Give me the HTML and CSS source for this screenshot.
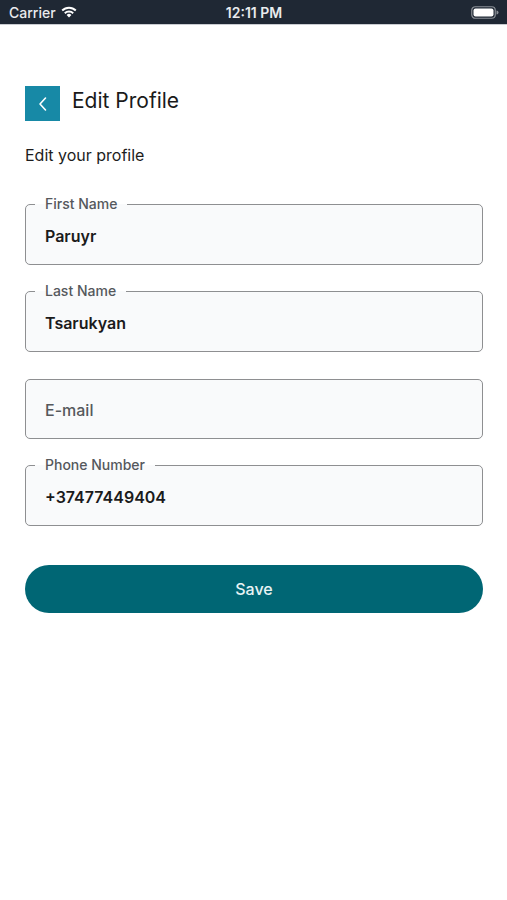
FILE: index.html
```html
<!DOCTYPE html>
<html>
<head>
    <title>Edit Profile</title>
    <meta charset="utf-8">
    <link rel="stylesheet" href="styles.css">
</head>
<body>
    <div class="status-bar">
        <span class="carrier">Carrier
            <svg class="wifi" width="16" height="12" viewBox="0 0 16 12">
                <path d="M8 11.5 L5.6 9 A3.4 3.4 0 0 1 10.4 9 Z" fill="#fff"/>
                <path d="M3.8 7.2 A6 6 0 0 1 12.2 7.2" stroke="#fff" stroke-width="1.9" fill="none"/>
                <path d="M1.2 4.5 A9.6 9.6 0 0 1 14.8 4.5" stroke="#fff" stroke-width="1.9" fill="none"/>
            </svg>
        </span>
        <span class="time">12:11 PM</span>
        <span class="battery">
            <svg width="28" height="13" viewBox="0 0 28 13">
                <rect x="0.75" y="0.75" width="23.5" height="11.5" rx="3.5" fill="none" stroke="#8a8f96" stroke-width="1.2"/>
                <rect x="2.5" y="2.5" width="20" height="8" rx="2" fill="#fff"/>
                <path d="M25.5 4.5 a2 2 0 0 1 0 4 z" fill="#8a8f96"/>
            </svg>
        </span>
    </div>

    <main class="page">
        <div class="header">
            <button class="back-btn">
                <svg width="12" height="16" viewBox="0 0 12 16">
                    <path d="M8.5 2 L3 8 L8.5 14" stroke="#fff" stroke-width="1.6" fill="none" stroke-linecap="round" stroke-linejoin="round"/>
                </svg>
            </button>
            <h1 class="title">Edit Profile</h1>
        </div>

        <p class="subtitle">Edit your profile</p>

        <form class="form">
            <fieldset class="field">
                <legend>First Name</legend>
                <input type="text" value="Paruyr">
            </fieldset>
            <fieldset class="field">
                <legend>Last Name</legend>
                <input type="text" value="Tsarukyan">
            </fieldset>
            <fieldset class="field field-plain">
                <input type="email" placeholder="E-mail">
            </fieldset>
            <fieldset class="field">
                <legend>Phone Number</legend>
                <input type="tel" value="+37477449404">
            </fieldset>

            <button type="button" class="save-btn">Save</button>
        </form>
    </main>
</body>
</html>
```

FILE: styles.css
```css
body {
    margin: 0;
    background: #ffffff;
    font-family: Inter, "Noto Sans", sans-serif;
    color: #1b1b1b;
}

.status-bar {
    height: 25px;
    background: #1f2834;
    border-bottom: 1px solid #c9ccd1;
    box-sizing: border-box;
    display: flex;
    align-items: center;
    justify-content: space-between;
    padding: 0 8px 0 9px;
    color: #e9ebee;
    font-size: 14px;
    font-weight: 500;
}
.carrier {
    display: flex;
    align-items: center;
    gap: 5px;
    width: 90px;
}
.time {
    font-weight: 600;
}
.battery {
    width: 90px;
    display: flex;
    justify-content: flex-end;
}

.page {
    padding: 61px 24px 0 25px;
}

.header {
    display: flex;
    align-items: center;
    gap: 12px;
}
.back-btn {
    width: 35px;
    height: 35px;
    border: none;
    background: #1789a6;
    display: flex;
    align-items: center;
    justify-content: center;
    padding: 0;
}
.title {
    margin: 0;
    padding-bottom: 6px;
    font-size: 21px;
    font-weight: 400;
    color: #1a1a1a;
}

.subtitle {
    margin: 24px 0 0;
    font-size: 16px;
    line-height: 20px;
    color: #1d1d1d;
}

.form {
    margin-top: 31px;
    display: flex;
    flex-direction: column;
    gap: 18px;
}

.field {
    margin: 0;
    border: 1px solid #8e8f91;
    border-radius: 5px;
    background: #f9fafb;
    padding: 14px 19px 18px;
}
.field legend {
    margin-left: -10px;
    padding: 0 10px;
    font-size: 14px;
    line-height: 16px;
    font-weight: 500;
    color: #55585c;
}
.field-plain {
    margin-top: 9px;
    padding: 20px 19px 18px;
}
.field input {
    display: block;
    width: 100%;
    border: none;
    background: transparent;
    padding: 0;
    outline: none;
    font-family: inherit;
    font-size: 16px;
    line-height: 20px;
    height: 20px;
    font-weight: 600;
    color: #1b1b1b;
}
.field input::placeholder {
    color: #55585c;
    font-weight: 500;
}

.save-btn {
    margin-top: 21px;
    height: 48px;
    border: none;
    border-radius: 24px;
    background: #006674;
    color: #e8f3f4;
    font-family: inherit;
    font-size: 16px;
    font-weight: 500;
}
```
